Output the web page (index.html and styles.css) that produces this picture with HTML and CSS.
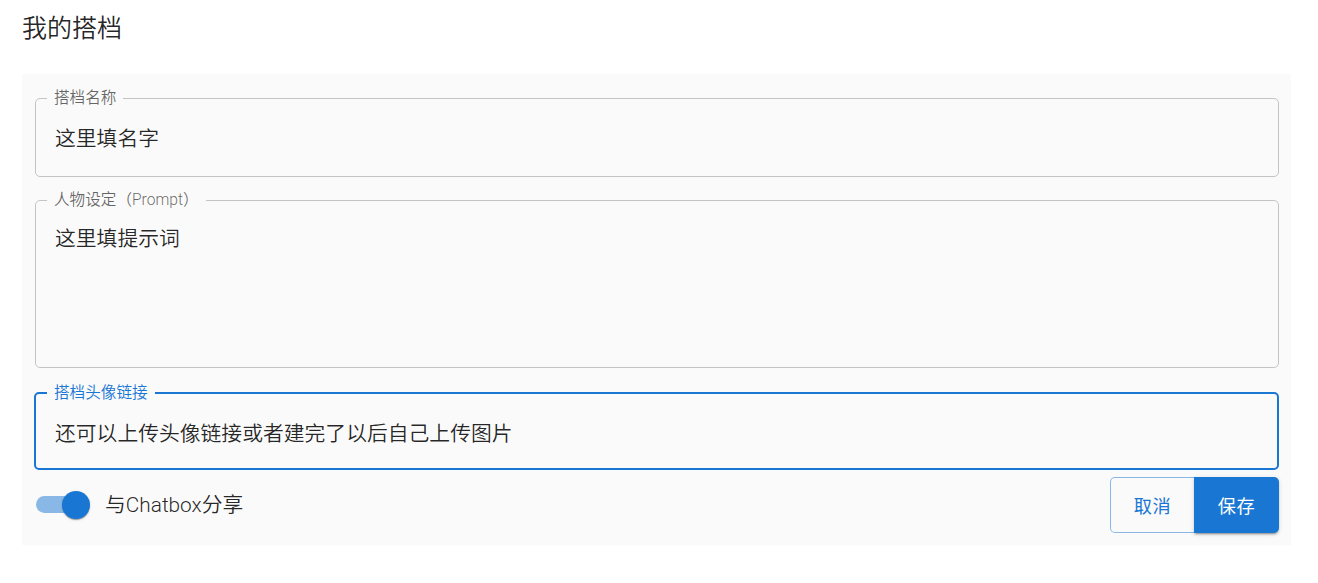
FILE: index.html
```html
<!DOCTYPE html>
<html lang="zh-CN">
<head>
<meta charset="utf-8">
<title>我的搭档</title>
<link rel="stylesheet" href="styles.css">
</head>
<body>
<div class="page">
  <h1 class="title">我的搭档</h1>
  <form class="panel">
    <fieldset class="field field-name">
      <legend class="field-label">搭档名称</legend>
      <input class="field-input" type="text" value="这里填名字">
    </fieldset>
    <fieldset class="field field-prompt">
      <legend class="field-label">人物设定（Prompt）</legend>
      <textarea class="field-input field-textarea">这里填提示词</textarea>
    </fieldset>
    <fieldset class="field field-avatar is-focused">
      <legend class="field-label">搭档头像链接</legend>
      <input class="field-input" type="text" value="还可以上传头像链接或者建完了以后自己上传图片">
    </fieldset>
    <div class="actions">
      <label class="share">
        <span class="switch">
          <span class="switch-track"></span>
          <span class="switch-thumb"></span>
        </span>
        <span class="share-text">与Chatbox分享</span>
      </label>
      <div class="btn-group">
        <button type="button" class="btn btn-outline">取消</button>
        <button type="button" class="btn btn-filled">保存</button>
      </div>
    </div>
  </form>
</div>
</body>
</html>
```
FILE: styles.css
```css
* { box-sizing: border-box; }

html, body {
  margin: 0;
  padding: 0;
  background: #ffffff;
}

body {
  font-family: Roboto, "Noto Sans CJK SC", "Noto Sans", sans-serif;
  font-weight: 350;
  color: rgba(0, 0, 0, 0.87);
}

.page {
  padding: 12px 27px 0 22px;
}

.title {
  margin: 0 0 28px 0;
  font-size: 25px;
  line-height: 34px;
  font-weight: 350;
  color: rgba(0, 0, 0, 0.87);
}

.panel {
  background: #fafafa;
  padding: 16px 12px 12px 13px;
  display: flex;
  flex-direction: column;
}

.field {
  margin: 0;
  padding: 0;
  min-width: 0;
  border: 1px solid #c4c4c4;
  border-radius: 5px;
}

.field-prompt { margin-top: 15px; }
.field-avatar { margin-top: 17px; }

.field-label {
  margin-left: 11px;
  padding: 0 7px;
  font-size: 15.6px;
  line-height: 16px;
  color: rgba(0, 0, 0, 0.6);
}

.field-input {
  display: block;
  width: 100%;
  border: 0;
  outline: none;
  background: transparent;
  font-family: inherit;
  font-weight: inherit;
  font-size: 20.8px;
  line-height: 30px;
  color: rgba(0, 0, 0, 0.87);
  padding: 16px 19px 24px 19px;
  height: 70px;
  margin: 0;
}

.field-textarea {
  height: 159px;
  padding: 16px 19px;
  resize: none;
  overflow: hidden;
}

.is-focused {
  border: 2px solid #1976d2;
  margin-left: -1px;
}

.is-focused .field-label {
  margin-left: 11px;
  color: #1976d2;
}

.is-focused .field-input {
  height: 67px;
  padding: 16px 19px 21px 19px;
}

.actions {
  margin-top: 7px;
  height: 56px;
  display: flex;
  align-items: center;
  justify-content: space-between;
}

.share {
  display: flex;
  align-items: center;
  margin-left: 1px;
}

.switch {
  position: relative;
  display: block;
  width: 55px;
  height: 28px;
}

.switch-track {
  position: absolute;
  left: 0;
  top: 5px;
  width: 44px;
  height: 17px;
  border-radius: 9px;
  background: #8ab8e6;
}

.switch-thumb {
  position: absolute;
  left: 26px;
  top: 0;
  width: 28px;
  height: 28px;
  border-radius: 50%;
  background: #1976d2;
  box-shadow: 0 2px 1px -1px rgba(0,0,0,0.2), 0 1px 1px 0 rgba(0,0,0,0.14), 0 1px 3px 0 rgba(0,0,0,0.12);
}

.share-text {
  margin-left: 14px;
  font-size: 20.8px;
  line-height: 30px;
  color: rgba(0, 0, 0, 0.87);
}

.btn-group {
  display: flex;
  height: 56px;
}

.btn {
  height: 56px;
  font-family: inherit;
  font-size: 18.2px;
  font-weight: 400;
  letter-spacing: 0.5px;
  cursor: pointer;
  margin: 0;
}

.btn-outline {
  width: 84px;
  background: transparent;
  color: #1976d2;
  border: 1px solid rgba(25, 118, 210, 0.5);
  border-right: 0;
  border-radius: 5px 0 0 5px;
}

.btn-filled {
  width: 85px;
  background: #1976d2;
  color: #ffffff;
  border: 0;
  border-radius: 0 5px 5px 0;
  box-shadow: 0 3px 1px -2px rgba(0,0,0,0.2), 0 2px 2px 0 rgba(0,0,0,0.14), 0 1px 5px 0 rgba(0,0,0,0.12);
}
```
